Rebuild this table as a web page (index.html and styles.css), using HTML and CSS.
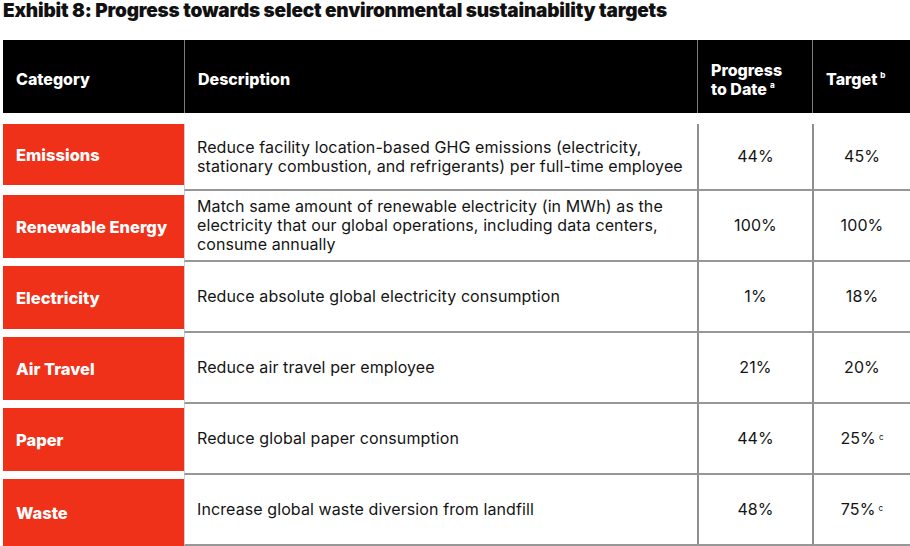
FILE: index.html
```html
<!DOCTYPE html>
<html lang="en">
<head>
<meta charset="utf-8">
<title>Exhibit 8</title>
<link rel="stylesheet" href="styles.css">
</head>
<body>
<h1 class="title">Exhibit 8: Progress towards select environmental sustainability targets</h1>
<div class="table">
  <div class="head">
    <div class="hcell"><span>Category</span></div>
    <div class="hcell sep"><span>Description</span></div>
    <div class="hcell sep"><span>Progress<br>to Date<sup>a</sup></span></div>
    <div class="hcell sep"><span>Target<sup>b</sup></span></div>
  </div>
  <div class="row first">
    <div class="cat"><div class="tag">Emissions</div></div>
    <div class="desc"><span>Reduce facility location-based GHG emissions (electricity, stationary combustion, and refrigerants) per full-time employee</span></div>
    <div class="num"><span>44%</span></div>
    <div class="num"><span>45%</span></div>
  </div>
  <div class="row">
    <div class="cat"><div class="tag">Renewable Energy</div></div>
    <div class="desc"><span>Match same amount of renewable electricity (in MWh) as the electricity that our global operations, including data centers, consume annually</span></div>
    <div class="num"><span>100%</span></div>
    <div class="num"><span>100%</span></div>
  </div>
  <div class="row">
    <div class="cat"><div class="tag">Electricity</div></div>
    <div class="desc"><span>Reduce absolute global electricity consumption</span></div>
    <div class="num"><span>1%</span></div>
    <div class="num"><span>18%</span></div>
  </div>
  <div class="row">
    <div class="cat"><div class="tag">Air Travel</div></div>
    <div class="desc"><span>Reduce air travel per employee</span></div>
    <div class="num"><span>21%</span></div>
    <div class="num"><span>20%</span></div>
  </div>
  <div class="row">
    <div class="cat"><div class="tag">Paper</div></div>
    <div class="desc"><span>Reduce global paper consumption</span></div>
    <div class="num"><span>44%</span></div>
    <div class="num"><span>25%<sup>c</sup></span></div>
  </div>
  <div class="row last">
    <div class="cat"><div class="tag">Waste</div></div>
    <div class="desc"><span>Increase global waste diversion from landfill</span></div>
    <div class="num"><span>48%</span></div>
    <div class="num"><span>75%<sup>c</sup></span></div>
  </div>
</div>
</body>
</html>
```
FILE: styles.css
```css
html, body {
  margin: 0;
  padding: 0;
  background: #ffffff;
}
body {
  padding-left: 3px;
  font-family: Inter, "Liberation Sans", sans-serif;
  color: #111111;
}
.title {
  margin: 0 0 18px 0;
  font-size: 19px;
  line-height: 22px;
  font-weight: 900;
  letter-spacing: -0.18px;
  color: #111111;
}
.table {
  width: 907px;
}
.head,
.row {
  display: grid;
  grid-template-columns: 181px 513px 115px 98px;
}
.head {
  height: 73px;
  background: #000000;
  margin-bottom: 11px;
}
.hcell {
  display: flex;
  align-items: center;
  padding: 6px 0 0 13px;
  color: #ffffff;
  font-size: 16px;
  font-weight: 800;
  line-height: 19px;
}
.hcell.sep {
  border-left: 1px solid #7a7a7a;
}
.hcell sup {
  font-size: 8px;
  line-height: 0;
  vertical-align: 7px;
  margin-left: 3px;
}
.num sup {
  font-size: 8px;
  line-height: 0;
  vertical-align: 4px;
  margin-left: 3px;
}
.cat {
  padding: 4px 0;
  display: flex;
}
.row.first .cat {
  padding-top: 0;
  height: 65px;
  box-sizing: border-box;
}
.row {
  height: 71px;
}
.row.first {
  height: 67px;
}
.row.last .cat {
  padding-bottom: 0;
}
.tag {
  flex: 1;
  background: #f0311a;
  color: #ffffff;
  font-size: 16.5px;
  font-weight: 800;
  display: flex;
  align-items: center;
  padding-left: 13px;
}
.desc,
.num {
  border-bottom: 2px solid #979797;
  display: flex;
  align-items: center;
  font-size: 16px;
  line-height: 19px;
  letter-spacing: 0.1px;
  color: #141414;
}
.desc {
  border-left: 1px solid #cfcfcf;
  padding: 0 10px 0 12px;
}
.num {
  justify-content: center;
  border-left: 2px solid #8f8f8f;
}
```
